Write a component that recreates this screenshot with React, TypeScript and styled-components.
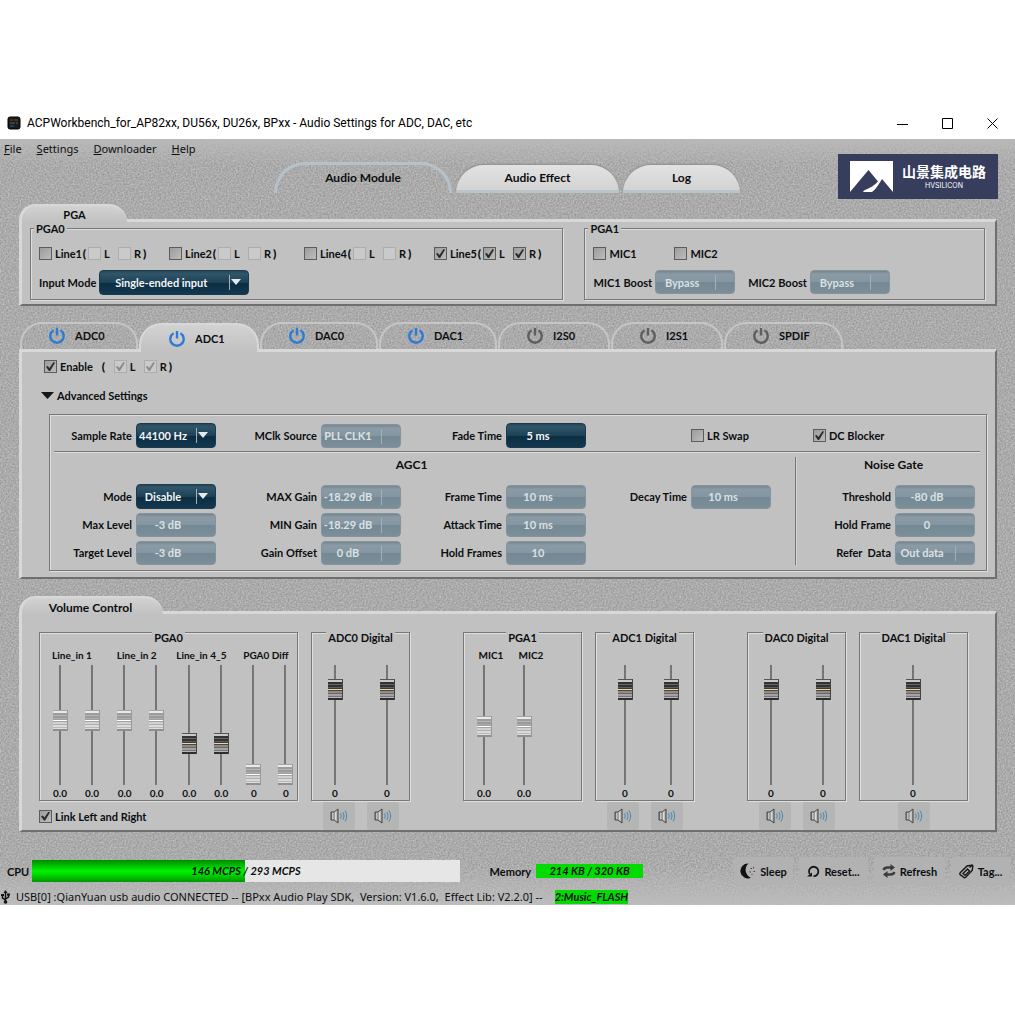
import React, { useState } from "react";
import styled, { createGlobalStyle, css } from "styled-components";

const ink = "#0c0e10";
const panel = "#c1c1c1";
const edgeLight = "#d8d8d8";
const edgeDark = "#6f6f6f";
const uiFont = `Lato, "Liberation Sans", sans-serif`;
const systemFont = `"Noto Sans", "Open Sans", "Liberation Sans", sans-serif`;
const titleFont = `Roboto, "Open Sans", "Liberation Sans", sans-serif`;

const grain = `url("data:image/svg+xml,%3Csvg xmlns='http://www.w3.org/2000/svg' width='240' height='240'%3E%3Cfilter id='g' color-interpolation-filters='sRGB'%3E%3CfeTurbulence type='fractalNoise' baseFrequency='0.6' numOctaves='2' stitchTiles='stitch'/%3E%3CfeColorMatrix values='0.26 0 0 0 0.54 0.26 0 0 0 0.54 0.26 0 0 0 0.54 0 0 0 0 1'/%3E%3C/filter%3E%3Crect width='240' height='240' filter='url(%23g)'/%3E%3C/svg%3E")`;

const GlobalStyle = createGlobalStyle`
  *, *::before, *::after { box-sizing: border-box; }
  body { margin: 0; background: #fff; color: ${ink}; font-family: ${uiFont}; }
  button, input, select { font: inherit; color: inherit; margin: 0; padding: 0; }
  button { border: 0; background: none; cursor: pointer; }
`;

const Page = styled.main`
  padding: 107px 0 110px;
`;

const AppWindow = styled.section`
  display: flex;
  flex-direction: column;
  min-width: 1015px;
`;

const TitleBar = styled.header`
  display: flex;
  align-items: center;
  height: 32px;
  padding-left: 7px;
  background: #fff;
  color: #000;
  font: 12px/16px ${titleFont};
`;

const AppTitle = styled.h1`
  flex: 1;
  margin: 0 0 0 6px;
  font: inherit;
`;

const WindowButton = styled.button`
  display: grid;
  place-items: center;
  width: 45px;
  height: 32px;
`;

const Client = styled.div`
  background-color: #a9a9a9;
  background-image:
    linear-gradient(rgba(186, 186, 186, 0.9), rgba(186, 186, 186, 0) 26px),
    linear-gradient(to top, rgba(190, 190, 190, 0.9), rgba(190, 190, 190, 0) 40px),
    ${grain};
  font-size: 11px;
  line-height: 13px;
  font-weight: 700;
`;

const Top = styled.div`
  display: flex;
  justify-content: space-between;
  height: 65px;
  padding-right: 17px;
`;

const MenuBar = styled.nav`
  display: flex;
  gap: 15px;
  height: 23px;
  padding: 2px 0 0 4px;
  font: 11px/16px ${systemFont};
`;

const MenuItem = styled.button`
  height: 16px;
  &::first-letter { text-decoration: underline; }
`;

const MainTabs = styled.div`
  display: flex;
  align-items: flex-end;
  gap: 4px;
  height: 31px;
  margin-left: 274px;
  font-size: 12px;
`;

const MainTab = styled.button<{ $active?: boolean; $width: number }>`
  width: ${(p) => p.$width}px;
  border-radius: 32px 32px 0 0;
  ${(p) =>
    p.$active
      ? css`
          height: 31px;
          padding-bottom: 3px;
          border: 3px solid #b6c1ca;
          border-bottom: 0;
        `
      : css`
          height: 28px;
          border-bottom: 3px solid #b9c4cb;
          background: linear-gradient(#e2e2e2, #d3d3d3);
          box-shadow: 0 -1px 2px #8d8d8d;
        `}
`;

const Logo = styled.div`
  display: flex;
  align-items: center;
  width: 160px;
  height: 45px;
  margin-top: 15px;
  padding: 0 10px 0 12px;
  gap: 9px;
  background: #363d5d;
  color: #fff;
`;

const LogoText = styled.div`
  display: flex;
  flex-direction: column;
  align-items: center;
  padding-bottom: 3px;
  font: 700 14px/21px "Noto Sans CJK SC", sans-serif;
  white-space: nowrap;
`;

const LogoSub = styled.span`
  font: 7px/8px Inter, sans-serif;
`;

const Section = styled.section<{ $gap: number }>`
  padding: 0 18px 0 19px;
  margin-bottom: ${(p) => p.$gap}px;
`;

const SectionTab = styled.h2<{ $width: number; $large?: boolean }>`
  position: relative;
  width: ${(p) => p.$width}px;
  height: 18px;
  margin: 0 0 -3px;
  padding: ${(p) => (p.$large ? "3px 4px 0 0" : "2px 0 0")};
  border: solid ${edgeLight};
  border-width: 2px 0 0 3px;
  border-radius: 18px 20px 0 0;
  background: linear-gradient(#d2d2d2, ${panel});
  font-size: ${(p) => (p.$large ? 12 : 11)}px;
  line-height: 13px;
  text-align: center;
`;

const Panel = styled.div`
  border: solid;
  border-width: 3px 2px 2px 3px;
  border-color: ${edgeLight} ${edgeDark} ${edgeDark} ${edgeLight};
  background: ${panel};
`;

const PgaPanel = styled(Panel)`
  display: grid;
  grid-template-columns: 534fr 401fr;
  gap: 21px;
  padding: 0 10px 4px 8px;
`;

const etched = css`
  border: 1px solid #777;
  box-shadow: inset 1px 1px 0 #dedede, 1px 1px 0 #dedede;
`;

const Group = styled.fieldset`
  min-width: 0;
  margin: 0;
  padding: 12px 8px 4px;
  ${etched}
`;

const GroupTitle = styled.legend`
  margin-left: -5px;
  padding: 0 2px;
  background: ${panel};
  line-height: 13px;
`;

const LineGrid = styled.div`
  display: grid;
  grid-template-columns: 130px 135px 130px 1fr;
  margin-bottom: 10px;
`;

const MicGrid = styled.div`
  display: grid;
  grid-template-columns: 81px 1fr;
  margin-bottom: 10px;
`;

const Inline = styled.div<{ $gap?: number }>`
  display: flex;
  align-items: center;
  gap: ${(p) => p.$gap || 0}px;
`;

const Bracket = styled.span<{ $wide?: boolean }>`
  width: ${(p) => (p.$wide ? 21 : 7)}px;
  font-size: 12px;
  font-weight: 900;
  line-height: 13px;
  text-align: center;
`;

const CheckLabel = styled.label<{ $width?: number }>`
  display: flex;
  align-items: center;
  gap: 3px;
  width: ${(p) => (p.$width ? p.$width + "px" : "auto")};
  white-space: nowrap;
`;

const CheckBox = styled.input`
  appearance: none;
  flex: none;
  position: relative;
  width: 13px;
  height: 13px;
  border: 1px solid #5c5c5c;
  background: linear-gradient(135deg, #9c9c9c, #bdbdbd);
  &:checked::before {
    content: "";
    position: absolute;
    inset: 1px;
    background: #2b2b2b;
    clip-path: polygon(0 52%, 20% 44%, 38% 66%, 84% 0, 100% 8%, 46% 100%, 32% 100%);
  }
  &:disabled {
    border-color: #adadad;
    background: #cacaca;
  }
  &:disabled:checked::before { background: #8a8a8a; }
`;

const dark = "linear-gradient(#24485a, #31566a 12%, #1d4257 50%, #0b2d42 52%, #123850)";
const muted = "linear-gradient(#76858f, #8a9ba6 14%, #8496a1 50%, #748995 52%, #7b8e99)";

const controlSkin = css`
  display: block;
  width: 100%;
  height: 25px;
  border: 1px solid #1c3a4a;
  border-radius: 4px;
  background: ${dark};
  color: #f2f6f8;
  font-weight: 700;
  text-align: center;
  outline: 0;
  &:disabled {
    height: 24px;
    border-color: #84949e;
    background: ${muted};
    color: #dce1e4;
    opacity: 1;
  }
`;

const TextBox = styled.input`
  ${controlSkin}
  padding-right: 16px;
`;

const SelectShell = styled.span<{ $width?: number }>`
  position: relative;
  display: block;
  width: ${(p) => p.$width || 80}px;
  &::before {
    content: "";
    position: absolute;
    top: 5px;
    right: 19px;
    width: 1px;
    height: 15px;
    background: #9fb2bc;
  }
  &:not(:has(:disabled))::after {
    content: "";
    position: absolute;
    top: 9px;
    right: 8px;
    border: solid transparent;
    border-width: 6px 5px 0;
    border-top-color: #e6ebee;
  }
`;

const SelectBox = styled.select`
  ${controlSkin}
  appearance: none;
  padding-right: 26px;
`;

const TabRow = styled.div`
  display: flex;
  align-items: flex-end;
  gap: 1px;
  padding-left: 1px;
`;

const DeviceTab = styled.button<{ $active?: boolean; $width: number }>`
  position: relative;
  display: flex;
  align-items: center;
  gap: 10px;
  width: ${(p) => p.$width}px;
  height: 27px;
  padding: 0 0 2px 27px;
  border: 2px solid #c6c6c6;
  border-bottom: 0;
  border-radius: 22px 22px 0 0;
  ${(p) =>
    p.$active &&
    css`
      height: 29px;
      margin-bottom: -3px;
      padding: 0 0 0 28px;
      border-color: ${edgeLight};
      background: linear-gradient(#d2d2d2, ${panel});
    `}
`;

const DevicePanel = styled(Panel)`
  padding: 8px 8px 6px 22px;
`;

const Disclosure = styled.button`
  display: flex;
  align-items: center;
  gap: 3px;
  height: 13px;
  margin: 16px 0 12px -3px;
  font-weight: 700;
`;

const SettingsBox = styled.div`
  margin-left: 5px;
  padding: 8px 0 5px;
  ${etched}
`;

const RateRow = styled.div`
  display: grid;
  grid-template-columns: 166fr 185fr 185fr 105fr 122fr 173fr;
  align-items: center;
`;

const Rule = styled.hr`
  height: 2px;
  margin: 3px 6px 0 4px;
  border: 0;
  border-top: 1px solid #777;
  border-bottom: 1px solid #dedede;
`;

const Dynamics = styled.div`
  display: grid;
  grid-template-columns: 745fr 191fr;
  padding-top: 4px;
`;

const NoiseGate = styled.div`
  padding-right: 11px;
  border-left: 1px solid #777;
  box-shadow: inset 1px 0 0 #d2d2d2;
`;

const BlockTitle = styled.h3<{ $inset?: boolean }>`
  margin: 0;
  padding: 1px ${(p) => (p.$inset ? 0 : 22)}px 13px ${(p) => (p.$inset ? 16 : 0)}px;
  font-size: 12px;
  line-height: 13px;
  text-align: center;
`;

const AgcGrid = styled.div`
  display: grid;
  grid-template-columns: 166fr 185fr 185fr 185fr 24fr;
  grid-auto-rows: 25px;
  row-gap: 3px;
`;

const GateGrid = styled.div`
  display: grid;
  grid-auto-rows: 25px;
  row-gap: 3px;
`;

const Field = styled.label<{ $column?: number }>`
  display: grid;
  grid-template-columns: 1fr 80px;
  align-items: center;
  gap: 4px;
  ${(p) => p.$column && `grid-column: ${p.$column};`}
  text-align: right;
  white-space: pre;
`;

const VolumePanel = styled(Panel)`
  display: flex;
  justify-content: space-between;
  padding: 6px 27px 0 17px;
`;

const Cluster = styled.div`
  display: flex;
  gap: 13px;
`;

const Strip = styled.div<{ $width: number }>`
  width: ${(p) => p.$width}px;
`;

const FaderGroup = styled.fieldset`
  min-width: 0;
  margin: 0;
  padding: 0;
  ${etched}
`;

const FaderTitle = styled.legend`
  margin: 0 auto;
  padding: 12px 2px 0;
  background: linear-gradient(transparent 10px, ${panel} 10px);
  line-height: 12px;
`;

const FaderRow = styled.div<{ $left: number; $right: number; $captioned?: boolean }>`
  display: flex;
  justify-content: space-between;
  padding: ${(p) => (p.$captioned ? 5 : 21)}px ${(p) => p.$right}px 0 ${(p) => p.$left}px;
`;

const FaderPair = styled.div`
  width: 54px;
`;

const FaderSolo = styled.div`
  width: 22px;
`;

const Caption = styled.div<{ $shift: number }>`
  display: flex;
  justify-content: center;
  width: 100%;
  height: 16px;
  padding-right: ${(p) => Math.max(p.$shift, 0)}px;
  padding-left: ${(p) => Math.max(-p.$shift, 0)}px;
  font-size: 10px;
  white-space: nowrap;
`;

const PairBody = styled.div`
  display: flex;
  justify-content: space-between;
`;

const FaderBox = styled.label`
  display: flex;
  flex-direction: column;
  align-items: center;
  width: 22px;
  font-size: 10px;
`;

const FaderInput = styled.input`
  appearance: none;
  writing-mode: vertical-lr;
  direction: rtl;
  width: 15px;
  height: 120px;
  margin-bottom: 2px;
  background: linear-gradient(90deg, transparent 6px, #707070 6px, #7a7a7a 8px, transparent 8px);
  &::-webkit-slider-thumb {
    appearance: none;
    width: 15px;
    height: 21px;
    border-right: 1px solid #444;
    background: linear-gradient(
      #555 0 1px, #c9c9c9 1px 3px, #333 3px 5px, #666 5px 6px, #333 6px 8px, #5d5d5d 8px 9px,
      #3c3838 9px 10px, #e8d9a0 10px 11px, #4a4444 11px 12px, #8f8a8a 12px 14px, #6c6868 14px 15px,
      #a5a1a1 15px 17px, #777 17px 18px, #b5b5b5 18px 19px, #2e2e2e 19px 21px
    );
  }
  &:disabled::-webkit-slider-thumb {
    border-right: 1px solid #999;
    background: linear-gradient(
      #a5a5a5 0 1px, #e9e9e9 1px 3px, #9c9c9c 3px 5px, #b5b5b5 5px 6px, #9a9a9a 6px 8px, #adadad 8px 9px,
      #9f9f9f 9px 10px, #fff 10px 11px, #a4a4a4 11px 12px, #d0d0d0 12px 14px, #b0b0b0 14px 15px,
      #dadada 15px 17px, #b9b9b9 17px 18px, #dedede 18px 19px, #8f8f8f 19px 21px
    );
  }
`;

const MuteRow = styled.div`
  display: flex;
  justify-content: center;
  gap: 12px;
  height: 29px;
  padding-top: 1px;
`;

const LinkRow = styled(MuteRow)`
  align-items: center;
  justify-content: flex-start;
`;

const MuteButton = styled.button`
  display: grid;
  place-items: center;
  width: 32px;
  border-radius: 3px;
  background: #b5b5b5;
`;

const Footer = styled.footer`
  display: flex;
  align-items: center;
  height: 28px;
  padding: 0 5px 0 7px;
`;

const LoadBar = styled.div`
  position: relative;
  flex: 1 1 428px;
  height: 22px;
  margin: 0 30px 0 3px;
`;

const Load = styled.progress`
  appearance: none;
  display: block;
  width: 100%;
  height: 22px;
  border: 0;
  &::-webkit-progress-bar { background: #e6e6e6; }
  &::-webkit-progress-value {
    background: linear-gradient(#008a00, #00c800 30%, #00f400 50%, #00c800 75%, #009600);
  }
`;

const LoadText = styled.span`
  position: absolute;
  inset: 0;
  font-style: italic;
  line-height: 22px;
  text-align: center;
`;

const MemoryValue = styled.output`
  width: 107px;
  height: 14px;
  margin: 0 91px 0 5px;
  background: #00dc00;
  font-style: italic;
  line-height: 14px;
  text-align: center;
`;

const ToolButtons = styled.div`
  display: flex;
  gap: 6px;
`;

const ToolButton = styled.button<{ $width: number }>`
  display: flex;
  align-items: center;
  justify-content: center;
  gap: 4px;
  width: ${(p) => p.$width}px;
  height: 28px;
  border-radius: 3px;
  background: #b2b2b2;
  font-weight: 700;
  white-space: nowrap;
`;

const StatusBar = styled.div`
  display: flex;
  align-items: center;
  height: 17px;
  margin-top: 3px;
  padding-left: 1px;
  font: 11px/14px ${systemFont};
  white-space: pre;
`;

const StatusText = styled.span`
  margin-left: 6px;
`;

const FlashBadge = styled.strong`
  height: 14px;
  margin-left: 12px;
  background: #00dc00;
  font: italic 700 11px/14px ${uiFont};
`;

/* ---------- icons ---------- */

const AppIcon = () => (
  <svg width="14" height="14" viewBox="0 0 14 14" aria-hidden="true">
    <rect x="1" y="1" width="12" height="12" rx="2" fill="#1b1b1f" stroke="#000" />
    <path d="M3 4h3M7 4h4" stroke="#8a3b2d" />
    <path d="M3 7h5M9 7h2" stroke="#2f7a43" />
    <path d="M3 10h4" stroke="#2b5d9a" />
  </svg>
);

const MountainMark = () => (
  <svg width="43" height="31" viewBox="0 0 43 31" aria-hidden="true">
    <rect width="43" height="31" fill="#fff" />
    <path d="M0 31 18.500 9 28 20.500C25 24 20 27 14 29.500L13 31Z" fill="#363d5d" />
    <path d="M22 31C26 28 29 23 32 18L43 31Z" fill="#363d5d" />
  </svg>
);

const Power = ({ on }: { on: boolean }) => (
  <svg width="16" height="16" viewBox="0 0 16 16" fill="none" stroke={on ? "#2f7ad6" : "#5f5f5f"} strokeWidth="2.4" aria-hidden="true">
    <path d="M4.600 2.300A6.700 6.700 0 1 0 11.400 2.300" />
    <path d="M8 0V7.500" />
  </svg>
);

const Speaker = () => (
  <svg width="18" height="16" viewBox="0 0 18 16" fill="none" aria-hidden="true">
    <defs>
      <linearGradient id="cone" x1="0" x2="1">
        <stop offset="0" stopColor="#777" />
        <stop offset="0.4" stopColor="#fff" />
        <stop offset="1" stopColor="#999" />
      </linearGradient>
    </defs>
    <path d="M1 4h3l4-3v14l-4-3H1Z" fill="url(#cone)" stroke="#444" />
    <path d="M4 4v8" stroke="#555" />
    <path d="M10.500 5.500q1.600 2.500 0 5M12.800 4q2.600 4 0 8M15 2.600q3.400 5.400 0 10.800" stroke="#4b87b3" />
  </svg>
);

const Moon = () => (
  <svg width="16" height="16" viewBox="0 0 16 16" aria-hidden="true">
    <path d="M8.500 .5A7.500 7.500 0 1 0 11 14.800 8.500 8.500 0 0 1 8.500 .5Z" fill="#111" />
    <path d="M10.500 5.500H12M13.500 4v1.500M9.500 9H11M13.500 8.500H15M11.500 11.500h1" stroke="#444" />
  </svg>
);

const Reset = () => (
  <svg width="13" height="13" viewBox="0 0 13 13" fill="none" stroke="#161616" strokeWidth="1.800" aria-hidden="true">
    <path d="M2.800 9.200A4.700 4.700 0 1 1 6.500 11.200" />
    <path d="M0 11.500h5V7.500Z" fill="#161616" stroke="none" />
  </svg>
);

const Refresh = () => (
  <svg width="14" height="14" viewBox="0 0 14 14" fill="none" stroke="#3c3c3c" strokeWidth="2.400" aria-hidden="true">
    <path d="M1.500 6Q2.500 3.500 5.500 3.500H9M12.500 8Q11.500 10.500 8.500 10.500H5" />
    <path d="M8.500 0l4.500 3.500-4.500 3.500ZM5.500 7 1 10.500 5.500 14Z" fill="#3c3c3c" stroke="none" />
  </svg>
);

const Tag = () => (
  <svg width="15" height="15" viewBox="0 0 15 15" fill="none" stroke="#161616" strokeWidth="1.400" aria-hidden="true">
    <path d="M1.200 8.800 8 2l4.500-.8L13.800 2l-.6 4.500-6.600 6.800a1.500 1.500 0 0 1-2 0L1.200 10.600a1.200 1.200 0 0 1 0-1.800Z" />
    <path d="M4 9.500 8.500 5l2 2L6 11.400Z" />
    <path d="M10.500 3.500 14 .8" />
  </svg>
);

const Usb = () => (
  <svg width="9" height="14" viewBox="0 0 9 14" fill="none" stroke="#111" strokeWidth="1.500" aria-hidden="true">
    <path d="M4.500 2v10M4.500 10 1.500 8V5M4.500 9l3-2V4" />
    <path d="M2.500 3l2-3 2 3Z" fill="#111" stroke="none" />
    <circle cx="4.500" cy="12" r="1.800" fill="#111" stroke="none" />
    <path d="M0 4h3v2H0ZM6 3.500h3v2H6Z" fill="#111" stroke="none" />
  </svg>
);

/* ---------- parts ---------- */

type CheckProps = { label: string; on?: boolean; off?: boolean; width?: number };

const Check = ({ label, on, off, width }: CheckProps) => (
  <CheckLabel $width={width}>
    <CheckBox type="checkbox" defaultChecked={on} disabled={off} />
    {label}
  </CheckLabel>
);

const LineInput = ({ name, on }: { name: string; on?: boolean }) => (
  <Inline>
    <Check label={name} on={on} width={42} />
    <Bracket>(</Bracket>
    <Check label="L" on={on} off={!on} width={30} />
    <Check label="R" on={on} off={!on} />
    <Bracket>)</Bracket>
  </Inline>
);

type PickProps = { value: string; off?: boolean; width?: number };

const Pick = ({ value, off, width }: PickProps) => (
  <SelectShell $width={width}>
    <SelectBox defaultValue={value} disabled={off}>
      <option>{value}</option>
    </SelectBox>
  </SelectShell>
);

type SettingProps = { label: string; value: string; pick?: boolean; off?: boolean; column?: number };

const Setting = ({ label, value, pick, off, column }: SettingProps) => (
  <Field $column={column}>
    {label}
    {pick ? <Pick value={value} off={off} /> : <TextBox defaultValue={value} disabled={off} />}
  </Field>
);

type FaderProps = { name: string; level: number; reading: string; off?: boolean };

const Fader = ({ name, level, reading, off }: FaderProps) => (
  <FaderBox>
    <FaderInput type="range" min={0} max={100} defaultValue={level} disabled={off} aria-label={name} />
    {reading}
  </FaderBox>
);

const Mute = ({ name }: { name: string }) => (
  <MuteButton type="button" aria-label={`Mute ${name}`}>
    <Speaker />
  </MuteButton>
);

type DigitalProps = { name: string; width: number; left?: number; right?: number; channels?: string[] };

const Digital = ({ name, width, left = 12, right = 11, channels = ["left", "right"] }: DigitalProps) => (
  <Strip $width={width}>
    <FaderGroup>
      <FaderTitle>{name} Digital</FaderTitle>
      <FaderRow $left={left} $right={right}>
        {channels.map((c) => (
          <Fader key={c} name={`${name} ${c}`} level={86} reading="0" />
        ))}
      </FaderRow>
    </FaderGroup>
    <MuteRow>
      {channels.map((c) => (
        <Mute key={c} name={`${name} ${c}`} />
      ))}
    </MuteRow>
  </Strip>
);

const lines = [
  { name: "Line1" },
  { name: "Line2" },
  { name: "Line4" },
  { name: "Line5", on: true },
];

const devices = [
  { name: "ADC0", on: true, width: 118 },
  { name: "ADC1", on: true, width: 120 },
  { name: "DAC0", on: true, width: 118 },
  { name: "DAC1", on: true, width: 118 },
  { name: "I2S0", on: false, width: 112 },
  { name: "I2S1", on: false, width: 112 },
  { name: "SPDIF", on: false, width: 119 },
];

const lineFaders = [
  { name: "Line_in 1", level: 55, reading: "0.0", off: true },
  { name: "Line_in 2", level: 55, reading: "0.0", off: true },
  { name: "Line_in 4_5", level: 31, reading: "0.0", off: false },
  { name: "PGA0 Diff", level: 0, reading: "0", off: true },
];

export default function App() {
  const [page, setPage] = useState("Audio Module");
  const [device, setDevice] = useState("ADC1");

  return (
    <Page>
      <GlobalStyle />
      <AppWindow>
        <TitleBar>
          <AppIcon />
          <AppTitle>ACPWorkbench_for_AP82xx, DU56x, DU26x, BPxx - Audio Settings for ADC, DAC, etc</AppTitle>
          <WindowButton type="button" aria-label="Minimize">
            <svg width="11" height="11" viewBox="0 0 11 11" stroke="#000"><path d="M0 6.500h11" /></svg>
          </WindowButton>
          <WindowButton type="button" aria-label="Maximize">
            <svg width="11" height="11" viewBox="0 0 11 11" stroke="#000" fill="none"><path d="M.5.5h10v10H.5Z" /></svg>
          </WindowButton>
          <WindowButton type="button" aria-label="Close">
            <svg width="11" height="11" viewBox="0 0 11 11" stroke="#000"><path d="M.5.5l10 10M10.500.5l-10 10" /></svg>
          </WindowButton>
        </TitleBar>

        <Client>
          <Top>
            <div>
              <MenuBar>
                {["File", "Settings", "Downloader", "Help"].map((m) => (
                  <MenuItem key={m} type="button">{m}</MenuItem>
                ))}
              </MenuBar>
              <MainTabs role="tablist">
                {[
                  { name: "Audio Module", width: 178 },
                  { name: "Audio Effect", width: 163 },
                  { name: "Log", width: 117 },
                ].map((t) => (
                  <MainTab
                    key={t.name}
                    type="button"
                    role="tab"
                    aria-selected={page === t.name}
                    $active={page === t.name}
                    $width={t.width}
                    onClick={() => setPage(t.name)}
                  >
                    {t.name}
                  </MainTab>
                ))}
              </MainTabs>
            </div>
            <Logo>
              <MountainMark />
              <LogoText>
                山景集成电路
                <LogoSub>HVSILICON</LogoSub>
              </LogoText>
            </Logo>
          </Top>

          <Section $gap={16}>
            <SectionTab $width={108}>PGA</SectionTab>
            <PgaPanel>
              <Group>
                <GroupTitle>PGA0</GroupTitle>
                <LineGrid>
                  {lines.map((l) => (
                    <LineInput key={l.name} name={l.name} on={l.on} />
                  ))}
                </LineGrid>
                <CheckLabel>
                  Input Mode
                  <Pick value="Single-ended input" width={150} />
                </CheckLabel>
              </Group>
              <Group>
                <GroupTitle>PGA1</GroupTitle>
                <MicGrid>
                  <Check label="MIC1" />
                  <Check label="MIC2" />
                </MicGrid>
                <Inline $gap={13}>
                  <CheckLabel>
                    MIC1 Boost
                    <Pick value="Bypass" off />
                  </CheckLabel>
                  <CheckLabel>
                    MIC2 Boost
                    <Pick value="Bypass" off />
                  </CheckLabel>
                </Inline>
              </Group>
            </PgaPanel>
          </Section>

          <Section $gap={17}>
            <TabRow role="tablist">
              {devices.map((d) => (
                <DeviceTab
                  key={d.name}
                  type="button"
                  role="tab"
                  aria-selected={device === d.name}
                  $active={device === d.name}
                  $width={d.width}
                  onClick={() => setDevice(d.name)}
                >
                  <Power on={d.on} />
                  {d.name}
                </DeviceTab>
              ))}
            </TabRow>
            <DevicePanel>
              <Inline>
                <Check label="Enable" on />
                <Bracket $wide>(</Bracket>
                <Check label="L" on off width={30} />
                <Check label="R" on off />
                <Bracket>)</Bracket>
              </Inline>
              <Disclosure type="button" aria-expanded="true">
                <svg width="13" height="7" viewBox="0 0 13 7" aria-hidden="true"><path d="M0 0h13L6.500 7Z" fill="#161616" /></svg>
                Advanced Settings
              </Disclosure>
              <SettingsBox>
                <RateRow>
                  <Setting label="Sample Rate" value="44100 Hz" pick />
                  <Setting label="MClk Source" value="PLL CLK1" pick off />
                  <Setting label="Fade Time" value="5 ms" />
                  <span />
                  <Check label="LR Swap" />
                  <Check label="DC Blocker" on />
                </RateRow>
                <Rule />
                <Dynamics>
                  <div>
                    <BlockTitle>AGC1</BlockTitle>
                    <AgcGrid>
                      <Setting label="Mode" value="Disable" pick />
                      <Setting label="MAX Gain" value="-18.29 dB" pick off />
                      <Setting label="Frame Time" value="10 ms" off />
                      <Setting label="Decay Time" value="10 ms" off />
                      <Setting label="Max Level" value="-3 dB" off column={1} />
                      <Setting label="MIN Gain" value="-18.29 dB" pick off />
                      <Setting label="Attack Time" value="10 ms" off />
                      <Setting label="Target Level" value="-3 dB" off column={1} />
                      <Setting label="Gain Offset" value="0 dB" pick off />
                      <Setting label="Hold Frames" value="10" off />
                    </AgcGrid>
                  </div>
                  <NoiseGate>
                    <BlockTitle $inset>Noise Gate</BlockTitle>
                    <GateGrid>
                      <Setting label="Threshold" value="-80 dB" off />
                      <Setting label="Hold Frame" value="0" off />
                      <Setting label="Refer  Data" value="Out data" pick off />
                    </GateGrid>
                  </NoiseGate>
                </Dynamics>
              </SettingsBox>
            </DevicePanel>
          </Section>

          <Section $gap={25}>
            <SectionTab $width={144} $large>Volume Control</SectionTab>
            <VolumePanel>
              <Cluster>
                <Strip $width={259}>
                  <FaderGroup>
                    <FaderTitle>PGA0</FaderTitle>
                    <FaderRow $left={9} $right={0} $captioned>
                      {lineFaders.map((f) => (
                        <FaderPair key={f.name}>
                          <Caption $shift={8}>{f.name}</Caption>
                          <PairBody>
                            <Fader name={`${f.name} left`} level={f.level} reading={f.reading} off={f.off} />
                            <Fader name={`${f.name} right`} level={f.level} reading={f.reading} off={f.off} />
                          </PairBody>
                        </FaderPair>
                      ))}
                    </FaderRow>
                  </FaderGroup>
                  <LinkRow>
                    <Check label="Link Left and Right" on />
                  </LinkRow>
                </Strip>
                <Digital name="ADC0" width={99} />
              </Cluster>
              <Cluster>
                <Strip $width={119}>
                  <FaderGroup>
                    <FaderTitle>PGA1</FaderTitle>
                    <FaderRow $left={9} $right={46} $captioned>
                      {["MIC1", "MIC2"].map((m) => (
                        <FaderSolo key={m}>
                          <Caption $shift={-14}>{m}</Caption>
                          <Fader name={m} level={49} reading="0.0" off />
                        </FaderSolo>
                      ))}
                    </FaderRow>
                  </FaderGroup>
                </Strip>
                <Digital name="ADC1" width={99} left={18} />
              </Cluster>
              <Cluster>
                <Digital name="DAC0" width={99} />
                <Digital name="DAC1" width={109} left={42} channels={["output"]} />
              </Cluster>
            </VolumePanel>
          </Section>

          <Footer>
            <span>CPU</span>
            <LoadBar>
              <Load value={146} max={293} aria-label="CPU load" />
              <LoadText>146 MCPS / 293 MCPS</LoadText>
            </LoadBar>
            <span>Memory</span>
            <MemoryValue>214 KB / 320 KB</MemoryValue>
            <ToolButtons>
              <ToolButton type="button" $width={59}><Moon />Sleep</ToolButton>
              <ToolButton type="button" $width={69}><Reset />Reset...</ToolButton>
              <ToolButton type="button" $width={71}><Refresh />Refresh</ToolButton>
              <ToolButton type="button" $width={59}><Tag />Tag...</ToolButton>
            </ToolButtons>
          </Footer>
          <StatusBar>
            <Usb />
            <StatusText>
              {"USB[0] :QianYuan usb audio CONNECTED -- [BPxx Audio Play SDK,  Version: V1.6.0,  Effect Lib: V2.2.0] --"}
            </StatusText>
            <FlashBadge>2:Music_FLASH</FlashBadge>
          </StatusBar>
        </Client>
      </AppWindow>
    </Page>
  );
}
